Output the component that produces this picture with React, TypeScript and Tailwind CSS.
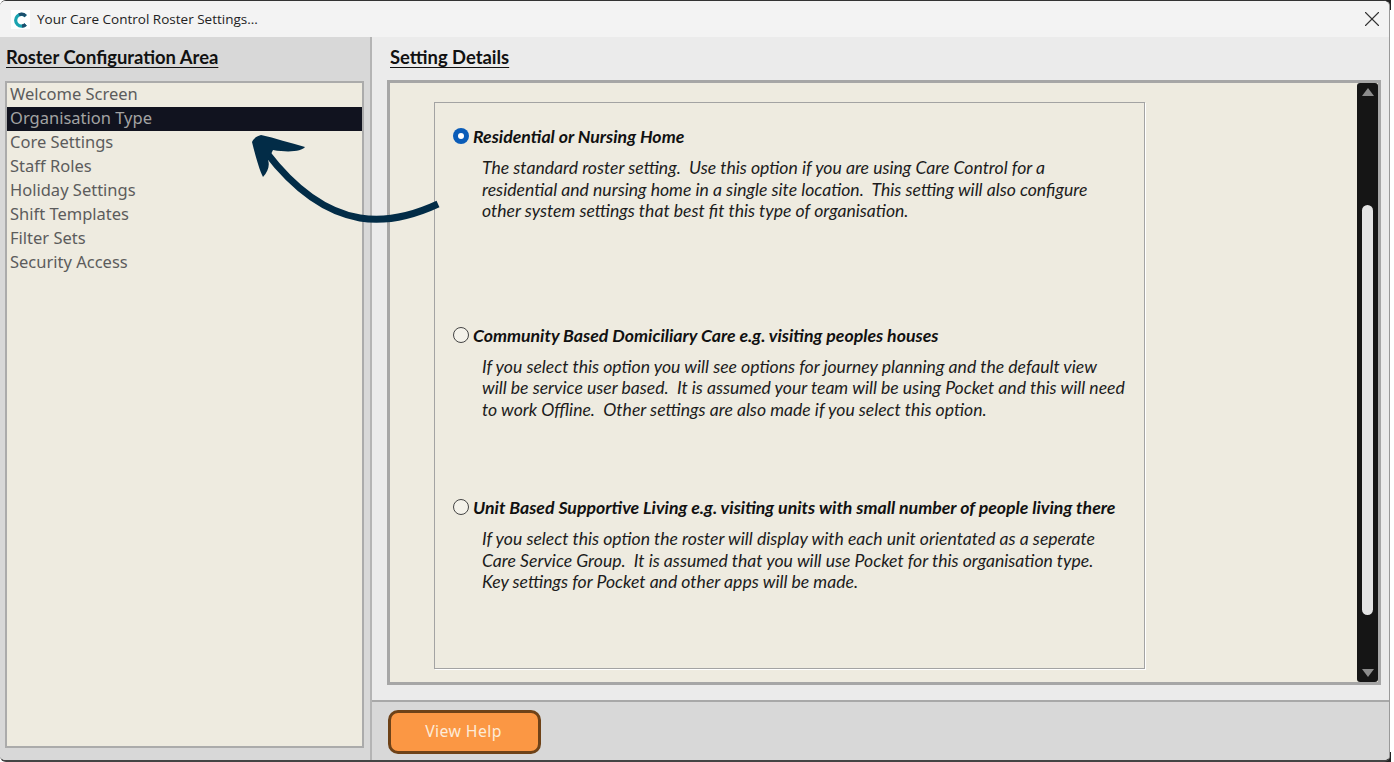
import { X } from "lucide-react";

const menuItems = [
  "Welcome Screen",
  "Organisation Type",
  "Core Settings",
  "Staff Roles",
  "Holiday Settings",
  "Shift Templates",
  "Filter Sets",
  "Security Access",
];

type OptionProps = {
  title: string;
  lines: string[];
  selected?: boolean;
  className?: string;
};

function Option({ title, lines, selected, className }: OptionProps) {
  return (
    <div className={className}>
      <div className="flex h-[20px] items-center">
        {selected ? (
          <span className="mb-[2px] flex size-[16px] items-center justify-center rounded-full bg-[#0a5cb8]">
            <span className="size-[6px] rounded-full bg-white" />
          </span>
        ) : (
          <span className="mb-[2px] size-[16px] rounded-full border border-[#444] bg-[#f4f2ea]" />
        )}
        <span className="ml-[4px] mt-[1px] text-[17.7px] font-bold italic text-[#111]">{title}</span>
      </div>
      <div className="mt-[10px] ml-[29px] text-[17.6px] italic leading-[21.5px] text-[#1c1c1c]">
        {lines.map((line) => (
          <p key={line} className="whitespace-pre">{line}</p>
        ))}
      </div>
    </div>
  );
}

export default function App() {
  return (
    <div className="relative h-[762px] w-[1394px] overflow-hidden bg-white font-['Lato',sans-serif]">
      <div className="absolute top-0 right-[3px] size-[10px] bg-[#222]" />
      <div className="absolute right-[3px] bottom-0 size-[10px] bg-[#222]" />
      <div className="relative flex h-[762px] w-[1390px] flex-col overflow-hidden rounded-[6px] border-t border-b-2 border-r border-t-[#333] border-b-[#444] border-r-[#999] bg-[#ebebeb]">
        <header className="flex h-[36px] shrink-0 items-center bg-[#f3f3f3] pl-[11px] pr-[4px]">
          <svg viewBox="0 0 19 19" className="size-[19px] bg-white">
            <path d="M14.7 6.1A5.9 5.9 0 1 0 14.7 14.5" fill="none" stroke="#1aa3b0" strokeWidth="3.2" />
            <path d="M14.7 6.1A5.9 5.9 0 0 0 8 4.9" fill="none" stroke="#1d4f6e" strokeWidth="3.2" />
            <path d="M14.7 14.5A5.9 5.9 0 0 1 11 16.2" fill="none" stroke="#1d4f6e" strokeWidth="3.2" />
          </svg>
          <span className="ml-[7px] font-['Open_Sans',sans-serif] text-[13.5px] text-[#222]">Your Care Control Roster Settings...</span>
          <X className="ml-auto size-[26px] text-[#333]" strokeWidth={1} />
        </header>

        <div className="flex min-h-0 flex-1">
          <aside className="flex w-[372px] shrink-0 flex-col border-r-[2px] border-[#b4b4b4] bg-[#d8d8d8] pr-[6px] pl-[5px]">
            <h2 className="mt-[7px] ml-[1px] h-[25px] text-[18.4px] font-bold text-[#111] underline underline-offset-[3px]">Roster Configuration Area</h2>
            <ul className="mt-[12px] mb-[12px] flex-1 border-2 border-[#ababab] bg-[#eeebe0] pt-0">
              {menuItems.map((item) => (
                <li
                  key={item}
                  className={
                    item === "Organisation Type"
                      ? "h-[24px] bg-[#11131f] pl-[3px] font-['Noto_Sans',sans-serif] text-[16.5px] leading-[22px] text-[#a3a3a3]"
                      : "h-[24px] pl-[3px] font-['Noto_Sans',sans-serif] text-[16.5px] leading-[22px] text-[#5c5c5c]"
                  }
                >
                  {item}
                </li>
              ))}
            </ul>
          </aside>

          <main className="flex min-w-0 flex-1 flex-col">
            <div className="flex min-h-0 flex-1 flex-col pl-[15px] pr-[8px] pb-[15px]">
              <h2 className="mt-[7px] ml-[3px] h-[25px] text-[18.4px] font-bold text-[#111] underline underline-offset-[3px]">Setting Details</h2>
              <div className="mt-[11px] flex min-h-0 flex-1 border-[3px] border-[#a6a6a6] bg-[#eeebe0]">
                <div className="flex-1 pt-[19px] pl-[44px]">
                  <div className="h-[567px] w-[711px] border border-[#a3a3a3] pl-[18px] pt-[24px] shadow-[1px_1px_0_#fff]">
                    <Option
                      selected
                      title="Residential or Nursing Home"
                      lines={[
                        "The standard roster setting.  Use this option if you are using Care Control for a",
                        "residential and nursing home in a single site location.  This setting will also configure",
                        "other system settings that best fit this type of organisation.",
                      ]}
                    />
                    <Option
                      className="mt-[104px]"
                      title="Community Based Domiciliary Care e.g. visiting peoples houses"
                      lines={[
                        "If you select this option you will see options for journey planning and the default view",
                        "will be service user based.  It is assumed your team will be using Pocket and this will need",
                        "to work Offline.  Other settings are also made if you select this option.",
                      ]}
                    />
                    <Option
                      className="mt-[78px]"
                      title="Unit Based Supportive Living e.g. visiting units with small number of people living there"
                      lines={[
                        "If you select this option the roster will display with each unit orientated as a seperate",
                        "Care Service Group.  It is assumed that you will use Pocket for this organisation type.",
                        "Key settings for Pocket and other apps will be made.",
                      ]}
                    />
                  </div>
                </div>
                <div className="flex w-[21px] shrink-0 flex-col items-center rounded-[3px] bg-[#151515] py-[5px]">
                  <span className="h-0 w-0 border-x-[6px] border-b-[8px] border-x-transparent border-b-[#8c8c8c]" />
                  <span className="mt-[109px] h-[410px] w-[11px] rounded-full bg-[#e4e4e4]" />
                  <span className="mt-auto h-0 w-0 border-x-[6px] border-t-[8px] border-x-transparent border-t-[#8c8c8c]" />
                </div>
              </div>
            </div>
            <footer className="flex h-[60px] shrink-0 items-start border-t-2 border-[#a8a8a8] bg-[#d8d8d8] pl-[16px] pt-[8px]">
              <button className="h-[44px] w-[153px] rounded-[10px] border-[3px] border-[#6e4218] bg-[#fb9744] pr-[2px] font-['Noto_Sans',sans-serif] text-[15.8px] tracking-[0.4px] text-[#fdebd8]">
                View Help
              </button>
            </footer>
          </main>
        </div>
      </div>

      {/* hand drawn arrow over the list and the divider */}
      <svg className="pointer-events-none absolute top-0 left-0" width="1394" height="762" viewBox="0 0 1394 762">
        <path d="M438 204C410 217 385 222 360 218C325 212 295 190 266 152" fill="none" stroke="#022c47" strokeWidth="7" />
        <path d="M261 135C275 138 290 143 305 147C302 151 290 153 273 150L268 160C270 165 268 172 263 177C259 170 254 150 252 142C254 138 257 136 261 135Z" fill="#022c47" />
      </svg>
    </div>
  );
}
